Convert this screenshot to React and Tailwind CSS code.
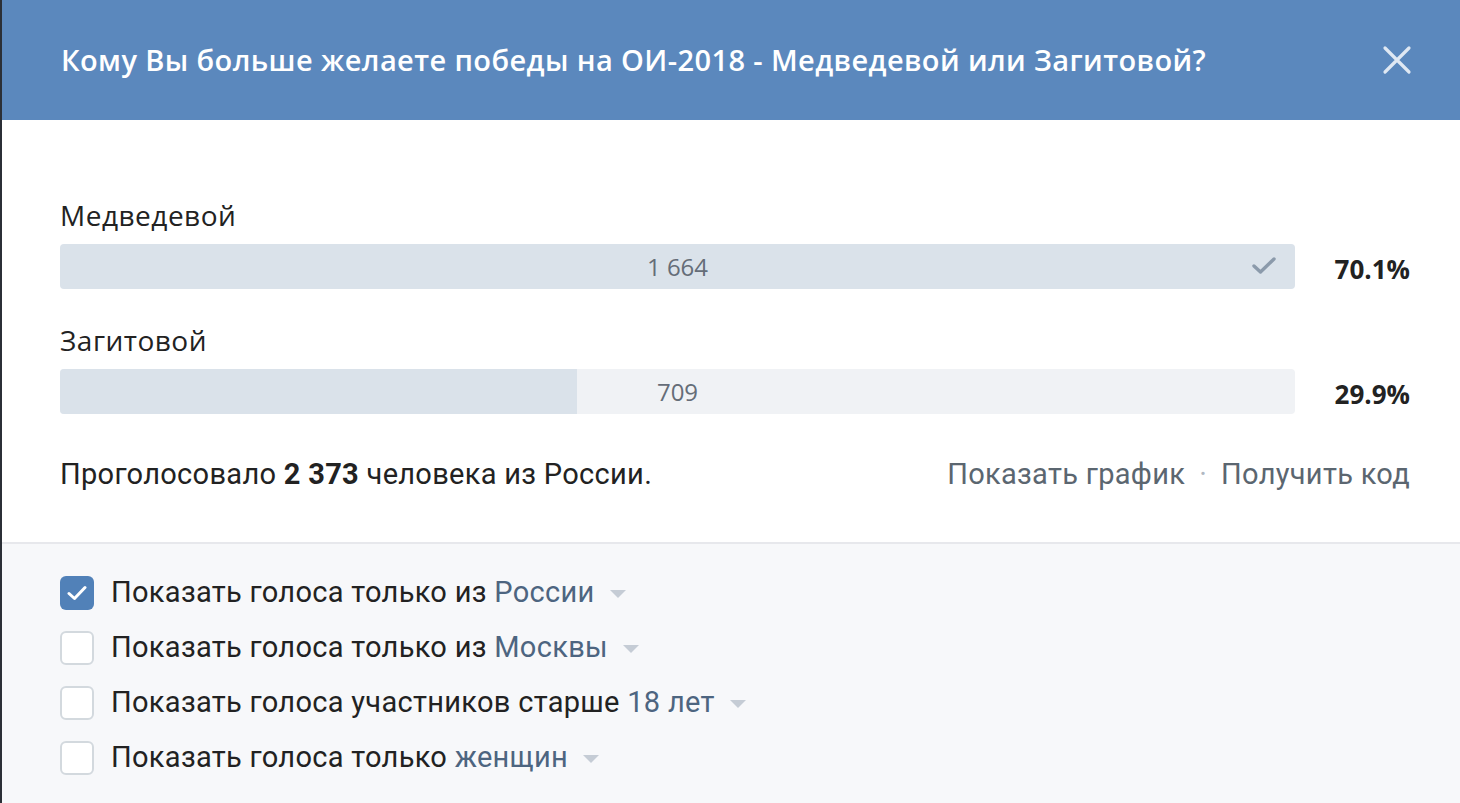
import React from "react";

const options = [
  { label: "Медведевой", votes: "1 664", percent: "70.1%", fill: 100, mine: true },
  { label: "Загитовой", votes: "709", percent: "29.9%", fill: 41.9, mine: false },
];

const filters = [
  { text: "Показать голоса только из ", link: "России", checked: true },
  { text: "Показать голоса только из ", link: "Москвы", checked: false },
  { text: "Показать голоса участников старше ", link: "18 лет", checked: false },
  { text: "Показать голоса только ", link: "женщин", checked: false },
];

const Caret = () => (
  <svg width="16" height="9" viewBox="0 0 16 9" className="ml-[15px] mt-[2px]">
    <path d="M0 0 L16 0 L8 8 Z" fill="#c5ccd5" />
  </svg>
);

const Checkbox = ({ checked }) =>
  checked ? (
    <div className="w-[34px] h-[34px] rounded-[6px] bg-[#5181b8] flex items-center justify-center shrink-0">
      <svg width="20" height="16" viewBox="0 0 20 16">
        <path d="M2 8.5 L7.5 13.5 L18 2.5" stroke="#fff" strokeWidth="3" fill="none" strokeLinecap="round" strokeLinejoin="round" />
      </svg>
    </div>
  ) : (
    <div className="w-[34px] h-[34px] rounded-[6px] border-2 border-[#d3d9de] bg-white shrink-0" />
  );

export default function App() {
  return (
    <div className="w-[1460px] h-[803px] flex bg-white overflow-hidden">
      <div className="w-[2px] bg-[#2b2f36] shrink-0" />
      <div className="flex-1 flex flex-col">
        {/* Header */}
        <div className="h-[120px] bg-[#5b88bd] flex items-center justify-between pl-[59px] pr-[48px] shrink-0">
          <h1 className="text-white text-[29px] font-semibold font-['Open_Sans',sans-serif] tracking-[0.4px]">
            Кому Вы больше желаете победы на ОИ-2018 - Медведевой или Загитовой?
          </h1>
          <svg width="30" height="30" viewBox="0 0 30 30">
            <path d="M3 3 L27 27 M27 3 L3 27" stroke="#dfe8f3" strokeWidth="3.2" strokeLinecap="round" />
          </svg>
        </div>

        {/* Results */}
        <div className="pl-[58px] pr-[50px] pt-[77px] pb-[50px] font-['Open_Sans',sans-serif]">
          <div className="flex flex-col gap-[33px]">
            {options.map((o) => (
              <div key={o.label}>
                <div className="text-[28px] text-[#222] leading-[36px] mb-[11px] tracking-[0.5px]">{o.label}</div>
                <div className="flex items-center">
                  <div className="relative w-[1235px] h-[45px] rounded-[4px] bg-[#f0f2f5] overflow-hidden">
                    <div className="h-full bg-[#dae2ea]" style={{ width: `${o.fill}%` }} />
                    <div className="absolute inset-0 flex items-center justify-center text-[24px] text-[#656d78]">
                      {o.votes}
                    </div>
                    {o.mine && (
                      <svg width="26" height="20" viewBox="0 0 26 20" className="absolute right-[18px] top-[12px]">
                        <path d="M3 10 L9.5 16 L23 3" stroke="#8b9aab" strokeWidth="3.4" fill="none" strokeLinecap="round" strokeLinejoin="round" />
                      </svg>
                    )}
                  </div>
                  <div className="flex-1 text-right text-[26px] font-bold text-[#222] pt-[6px]">{o.percent}</div>
                </div>
              </div>
            ))}
          </div>
          <div className="flex justify-between items-center mt-[42px] font-['Roboto',sans-serif] text-[29px] leading-[36px] tracking-[0.3px]">
            <div className="text-[#222]">
              Проголосовало <span className="font-bold">2 373</span> человека из России.
            </div>
            <div className="text-[#5b6670] flex items-center">
              <span>Показать график</span>
              <span className="mx-[14px] text-[#b0b8c2]">·</span>
              <span>Получить код</span>
            </div>
          </div>
        </div>

        {/* Filters */}
        <div className="flex-1 bg-[#f7f8fa] border-t-2 border-[#e7e8ec] pl-[58px] pt-[32px] flex flex-col gap-[21px] font-['Roboto',sans-serif]">
          {filters.map((f) => (
            <div key={f.link} className="flex items-center h-[34px]">
              <Checkbox checked={f.checked} />
              <div className="ml-[17px] text-[29px] text-[#222] tracking-[0.3px]">
                {f.text}
                <span className="text-[#4d6580]">{f.link}</span>
              </div>
              <Caret />
            </div>
          ))}
        </div>
      </div>
    </div>
  );
}
